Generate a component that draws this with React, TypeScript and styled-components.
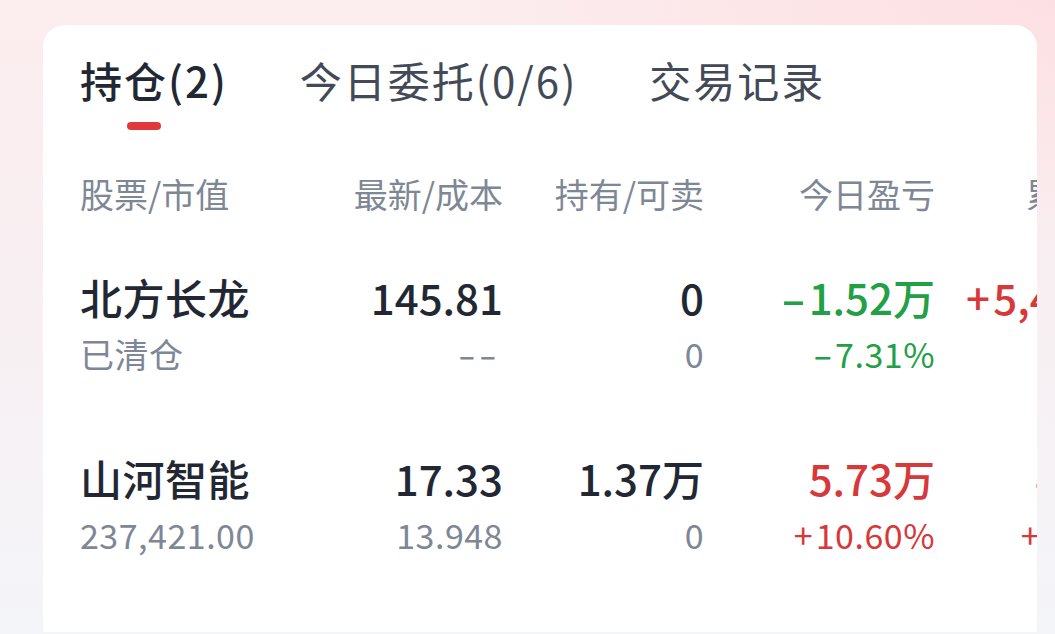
import { useState } from "react";
import styled, { createGlobalStyle } from "styled-components";

const GlobalStyle = createGlobalStyle`
  html, body {
    margin: 0;
    padding: 0;
  }
  body {
    width: 1055px;
    height: 634px;
    overflow: hidden;
    font-family: "Noto Sans CJK SC", "Noto Sans", sans-serif;
    background:
      radial-gradient(ellipse 600px 260px at 100% 0%, rgba(253, 222, 225, 0.9), rgba(253, 222, 225, 0) 100%),
      linear-gradient(180deg, #fcedee 0%, #f8eff2 45%, #f4f5f9 100%);
  }
`;

type Tone = "up" | "down" | "plain";

interface Holding {
  name: string;
  value: string;
  price: string;
  cost: string;
  hold: string;
  sellable: string;
  today: string;
  todayPct: string;
  todayTone: Tone;
  total: string;
  totalPct: string;
  totalTone: Tone;
}

const holdings: Holding[] = [
  {
    name: "北方长龙",
    value: "已清仓",
    price: "145.81",
    cost: "--",
    hold: "0",
    sellable: "0",
    today: "-1.52万",
    todayPct: "-7.31%",
    todayTone: "down",
    total: "+5,412.36",
    totalPct: "",
    totalTone: "up",
  },
  {
    name: "山河智能",
    value: "237,421.00",
    price: "17.33",
    cost: "13.948",
    hold: "1.37万",
    sellable: "0",
    today: "5.73万",
    todayPct: "+10.60%",
    todayTone: "up",
    total: "4.59万",
    totalPct: "+24.26%",
    totalTone: "up",
  },
];

const tabs = ["持仓(2)", "今日委托(0/6)", "交易记录"];
const columns = ["股票/市值", "最新/成本", "持有/可卖", "今日盈亏", "累计盈亏"];

function Signed({ text }: { text: string }) {
  const m = text.match(/^([+-]+)(.*)$/);
  if (!m) return <>{text}</>;
  const pair = m[1].length > 1;
  return (
    <>
      {m[1].split("").map((s, i) => (
        <Sign key={i} $minus={s === "-"} $pair={pair}>
          {s}
        </Sign>
      ))}
      {m[2]}
    </>
  );
}

export default function App() {
  const [active, setActive] = useState(0);

  return (
    <>
      <GlobalStyle />
      <Card>
        <TabBar>
          {tabs.map((t, i) => (
            <Tab key={t} $active={i === active} onClick={() => setActive(i)}>
              {t}
              {i === active && <Indicator />}
            </Tab>
          ))}
        </TabBar>

        <Table>
          <HeadRow>
            {columns.map((c, i) => (
              <HeadCell key={c} $left={i === 0}>
                {c}
              </HeadCell>
            ))}
          </HeadRow>

          {holdings.map((h) => (
            <Row key={h.name}>
              <Cell $left>
                <Name>{h.name}</Name>
                <Sub>{h.value}</Sub>
              </Cell>
              <Cell>
                <Main>{h.price}</Main>
                <Sub>
                  <Signed text={h.cost} />
                </Sub>
              </Cell>
              <Cell>
                <Main>{h.hold}</Main>
                <Sub>{h.sellable}</Sub>
              </Cell>
              <Cell>
                <Main $tone={h.todayTone}>
                  <Signed text={h.today} />
                </Main>
                <Sub $tone={h.todayTone}>
                  <Signed text={h.todayPct} />
                </Sub>
              </Cell>
              <Cell>
                <Main $tone={h.totalTone}>
                  <Signed text={h.total} />
                </Main>
                <Sub $tone={h.totalTone}>
                  <Signed text={h.totalPct} />
                </Sub>
              </Cell>
            </Row>
          ))}
        </Table>
      </Card>
    </>
  );
}

const toneColor = (tone?: Tone, fallback = "#222833") =>
  tone === "up" ? "#d7383a" : tone === "down" ? "#22a046" : fallback;

const Card = styled.div`
  margin: 25px 0 0 43px;
  width: 994px;
  height: 607px;
  background: #ffffff;
  border-radius: 22px 22px 0 0;
  overflow: hidden;
  padding: 27px 0 0 37px;
  box-sizing: border-box;
`;

const TabBar = styled.div`
  display: flex;
  gap: 72px;
  height: 78px;
`;

const Tab = styled.div<{ $active: boolean }>`
  position: relative;
  font-size: 42px;
  line-height: 56px;
  height: 56px;
  letter-spacing: 2px;
  font-weight: ${(p) => (p.$active ? 500 : 400)};
  color: ${(p) => (p.$active ? "#222833" : "#434a57")};
  white-space: nowrap;
  cursor: pointer;
`;

const Indicator = styled.span`
  position: absolute;
  left: 47px;
  top: 70px;
  width: 34px;
  height: 8px;
  border-radius: 4px;
  background: #e0383b;
`;

const Table = styled.div`
  display: flex;
  flex-direction: column;
  padding-top: 38px;
  width: 1082px;
`;

const grid = `
  display: grid;
  grid-template-columns: 240px 183px 201px 231px 227px;
`;

const HeadRow = styled.div`
  ${grid}
  height: 50px;
  align-items: center;
`;

const HeadCell = styled.div<{ $left?: boolean }>`
  font-size: 34px;
  color: #7e8796;
  text-align: ${(p) => (p.$left ? "left" : "right")};
  white-space: nowrap;
`;

const Row = styled.div`
  ${grid}
  padding: 54px 0 25px;
`;

const Cell = styled.div<{ $left?: boolean }>`
  display: flex;
  flex-direction: column;
  align-items: ${(p) => (p.$left ? "flex-start" : "flex-end")};
  gap: 12px;
  white-space: nowrap;
`;

const Main = styled.div<{ $tone?: Tone }>`
  font-size: 42px;
  line-height: 50px;
  height: 50px;
  font-weight: 500;
  color: ${(p) => toneColor(p.$tone)};
`;

const Name = styled(Main)`
  letter-spacing: 0.5px;
`;

const Sub = styled.div<{ $tone?: Tone }>`
  font-size: 34px;
  line-height: 40px;
  height: 40px;
  letter-spacing: 0.5px;
  color: ${(p) => toneColor(p.$tone, "#7e8796")};
`;

const Sign = styled.span<{ $minus: boolean; $pair?: boolean }>`
  display: inline-block;
  margin-right: ${(p) => (!p.$minus ? "0.08em" : p.$pair ? "0.26em" : "0.18em")};
  transform: ${(p) => (!p.$minus ? "none" : p.$pair ? "scaleX(1.5)" : "scaleX(1.7)")};
`;
